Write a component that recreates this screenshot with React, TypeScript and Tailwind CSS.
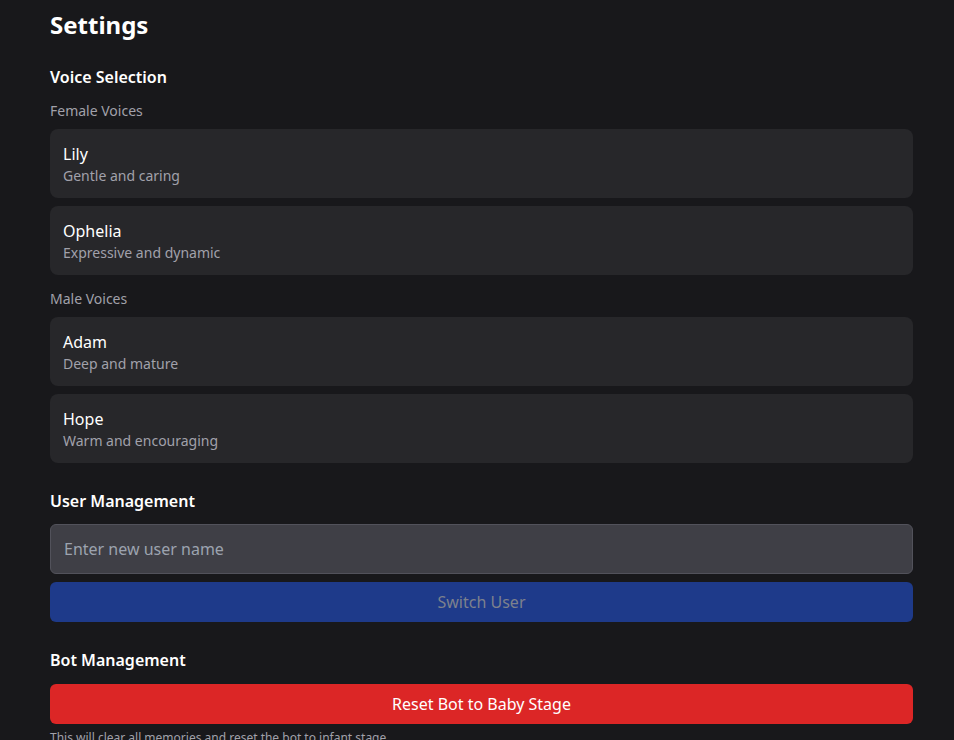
import React from "react";

const voices = {
  female: [
    { name: "Lily", desc: "Gentle and caring" },
    { name: "Ophelia", desc: "Expressive and dynamic" },
  ],
  male: [
    { name: "Adam", desc: "Deep and mature" },
    { name: "Hope", desc: "Warm and encouraging" },
  ],
};

function VoiceCard({ name, desc }: { name: string; desc: string }) {
  return (
    <button className="w-full text-left rounded-lg bg-[#27272a] pl-[13px] pr-3 pt-[13px] pb-3">
      <div className="text-base leading-6 text-white">{name}</div>
      <div className="text-sm leading-5 text-[#a1a1aa]">{desc}</div>
    </button>
  );
}

function Group({ label, items }: { label: string; items: { name: string; desc: string }[] }) {
  return (
    <div>
      <div className="text-sm leading-5 text-[#a1a1aa] mb-2">{label}</div>
      <div className="flex flex-col gap-2">
        {items.map((v) => (
          <VoiceCard key={v.name} {...v} />
        ))}
      </div>
    </div>
  );
}

export default function App() {
  return (
    <div
      className="min-h-[740px] bg-[#18181b] text-white overflow-hidden"
      style={{ fontFamily: '"Noto Sans", sans-serif' }}
    >
      <div className="ml-[50px] w-[863px] pt-[9px] flex flex-col">
        <h1 className="text-2xl leading-8 font-bold">Settings</h1>

        <section className="mt-6">
          <h2 className="text-base leading-6 font-semibold mb-3">Voice Selection</h2>
          <div className="flex flex-col gap-[14px]">
            <Group label="Female Voices" items={voices.female} />
            <Group label="Male Voices" items={voices.male} />
          </div>
        </section>

        <section className="mt-[26px]">
          <h2 className="text-base leading-6 font-semibold mb-[11px]">User Management</h2>
          <input
            placeholder="Enter new user name"
            className="w-full h-[50px] rounded-md bg-[#3f3f46] border border-[#52525b] pl-[13px] pr-3 text-base text-white placeholder:text-[#9ca3af] outline-none"
          />
          <button
            disabled
            className="mt-2 w-full h-10 rounded-md bg-[#1e3a8a] text-base text-[#7d818d]"
          >
            Switch User
          </button>
        </section>

        <section className="mt-[26px]">
          <h2 className="text-base leading-6 font-semibold mb-3">Bot Management</h2>
          <button className="w-full h-10 rounded-md bg-[#dc2626] text-base text-white">
            Reset Bot to Baby Stage
          </button>
          <p className="mt-1.5 text-xs leading-4 text-[#a1a1aa]">
            This will clear all memories and reset the bot to infant stage.
          </p>
        </section>
      </div>
    </div>
  );
}
